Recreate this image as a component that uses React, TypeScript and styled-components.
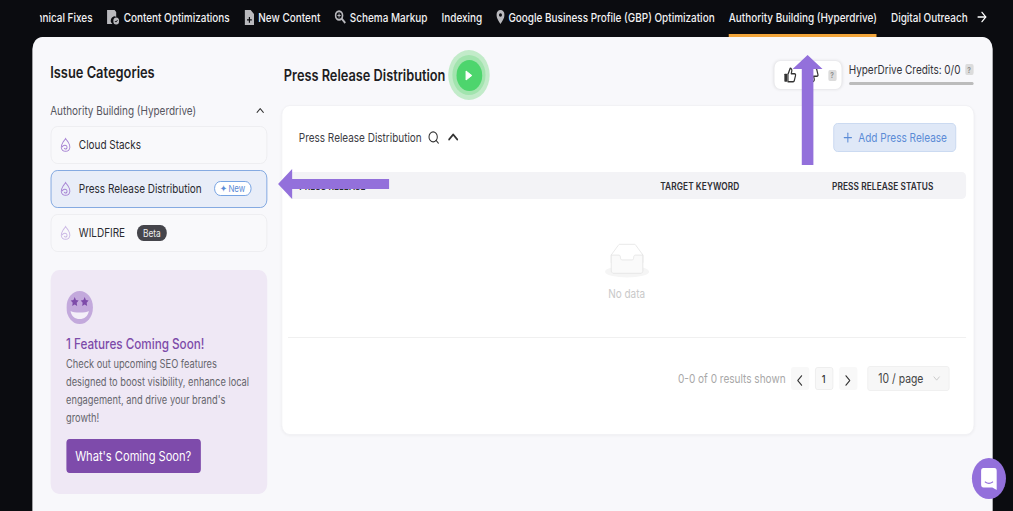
import React from "react";
import styled, { createGlobalStyle } from "styled-components";
import { Search, ChevronUp, ChevronDown, ChevronLeft, ChevronRight, ArrowRight, Plus } from "lucide-react";

const Global = createGlobalStyle`
  html, body { margin: 0; padding: 0; height: 100%; overflow: hidden; background: #0b0c10; }
  #root { height: 100%; }
  * { box-sizing: border-box; }
`;

/* The reference is a page 1220px wide photographed at 1013px: one horizontal squeeze covers all of it. */
const Page = styled.div`
  position: relative;
  width: 1220.5px;
  height: 511px;
  overflow: hidden;
  background: #0b0c10;
  font-family: Inter, "Noto Sans", sans-serif;
  transform: scaleX(0.83);
  transform-origin: 0 0;
`;
const Nav = styled.nav`
  height: 37px;
  display: flex;
  align-items: stretch;
  padding-left: 48px;
  padding-right: 26px;
`;
const NavClip = styled.div`
  flex: 1;
  min-width: 0;
  overflow: hidden;
`;
const NavTrack = styled.div`
  height: 37px;
  display: flex;
  gap: 17px;
  margin-left: -25px;
  width: max-content;
`;
const Tab = styled.div<{ $active?: boolean }>`
  height: 37px;
  display: flex;
  align-items: center;
  gap: 4.5px;
  color: #f1f1f3;
  font-size: 12px;
  font-weight: 500;
  white-space: nowrap;
  border-bottom: 3px solid ${(p) => (p.$active ? "#f2a53a" : "transparent")};
`;
const NavArrow = styled.div`
  width: 24px;
  display: flex;
  align-items: center;
  justify-content: center;
  color: #fff;
  padding-bottom: 3px;
`;
const Card = styled.main`
  margin-left: 38.5px;
  width: 1157px;
  height: 500px;
  border-radius: 12px 12px 0 0;
  background: #f8f8fb;
  padding: 24px 22px 0;
  display: flex;
  gap: 17px;
`;
const Sidebar = styled.aside`
  width: 261px;
  flex: none;
  display: flex;
  flex-direction: column;
`;
const SideTitle = styled.h2`
  margin: 0;
  height: 23px;
  line-height: 23px;
  font-size: 15.5px;
  font-weight: 600;
  color: #1d1d22;
`;
const SectionRow = styled.div`
  margin-top: 15.5px;
  height: 22px;
  display: flex;
  align-items: center;
  justify-content: space-between;
  font-size: 12px;
  color: #55555e;
  padding-right: 1px;
`;
const CatList = styled.div`
  margin-top: 4px;
  display: flex;
  flex-direction: column;
  gap: 5.5px;
`;
const Cat = styled.div<{ $active?: boolean }>`
  height: 38.5px;
  display: flex;
  align-items: center;
  padding-left: 9px;
  border-radius: 8px;
  border: 1px solid ${(p) => (p.$active ? "#7ba3de" : "#ececf0")};
  background: ${(p) => (p.$active ? "#e8edf8" : "#f9f9fb")};
  font-size: 12px;
  color: #2a2a30;
`;
const CatIcon = styled.svg<{ $faint?: boolean }>`
  width: 16px;
  height: 16px;
  flex: none;
  margin-right: 8.5px;
  opacity: ${(p) => (p.$faint ? 0.55 : 1)};
`;
const NewBadge = styled.span`
  margin-left: 14.5px;
  width: 45px;
  height: 15px;
  display: inline-flex;
  align-items: center;
  justify-content: center;
  gap: 2px;
  border-radius: 8px;
  border: 1px solid #6b9be0;
  background: #fff;
  color: #5b8bd6;
  font-size: 9.5px;
`;
const BetaBadge = styled.span`
  margin-left: 14.5px;
  height: 16px;
  padding: 0 7px;
  display: inline-flex;
  align-items: center;
  border-radius: 8px;
  background: #45454b;
  color: #f0f0f0;
  font-size: 10px;
`;
const Promo = styled.section`
  margin-top: 18px;
  height: 224px;
  border-radius: 10px;
  background: #efe8f5;
  padding: 21px 19px;
  display: flex;
  flex-direction: column;
  align-items: flex-start;
`;
const Face = styled.svg`
  width: 32px;
  height: 33px;
  flex: none;
`;
const PromoTitle = styled.h3`
  margin: 11px 0 0;
  height: 18px;
  line-height: 18px;
  font-size: 14.1px;
  font-weight: 500;
  color: #7d4ba9;
  white-space: nowrap;
`;
const PromoBody = styled.p`
  margin: 2px 0 0;
  font-size: 11.2px;
  line-height: 18px;
  color: #66666d;
  white-space: nowrap;
`;
const PromoButton = styled.button`
  margin-top: 12px;
  flex: none;
  width: 162px;
  height: 34px;
  border: 0;
  border-radius: 4px;
  background: #7e4bab;
  color: #fff;
  font-family: inherit;
  font-size: 13.4px;
  font-weight: 400;
  white-space: nowrap;
  padding: 0;
`;
const Content = styled.div`
  flex: 1;
  min-width: 0;
  display: flex;
  flex-direction: column;
`;
const Header = styled.header`
  height: 28px;
  display: flex;
  align-items: center;
  padding-left: 3.5px;
`;
const PageTitle = styled.h1`
  margin: 0;
  font-size: 15.4px;
  font-weight: 600;
  color: #1d1d22;
  white-space: nowrap;
`;
const RingOuter = styled.div`
  flex: none;
  margin-left: 3.5px;
  width: 50px;
  height: 50px;
  border-radius: 50%;
  background: #c2ebc9;
  display: flex;
  align-items: center;
  justify-content: center;
`;
const RingMiddle = styled.div`
  width: 40px;
  height: 40px;
  border-radius: 50%;
  background: #a2e4ae;
  display: flex;
  align-items: center;
  justify-content: center;
`;
const PlayDot = styled.div`
  width: 31px;
  height: 31px;
  border-radius: 50%;
  background: #4dd56d;
  display: flex;
  align-items: center;
  justify-content: center;
`;
const HeaderRight = styled.div`
  margin-left: auto;
  display: flex;
  align-items: flex-start;
  gap: 9px;
`;
const Votes = styled.div`
  width: 81px;
  height: 28px;
  border-radius: 7px;
  background: #fff;
  box-shadow: 0 0 4px rgba(0, 0, 0, 0.14);
  display: flex;
  align-items: center;
  padding-left: 11px;
  gap: 11px;
  color: #333;
`;
const Help = styled.span`
  width: 10px;
  height: 11px;
  flex: none;
  border-radius: 2px;
  background: #dcdcdc;
  color: #8a8a8a;
  font-size: 8px;
  font-weight: 600;
  display: inline-flex;
  align-items: center;
  justify-content: center;
`;
const Credits = styled.div`
  width: 150px;
  height: 28px;
  margin-right: 1px;
  display: flex;
  flex-direction: column;
`;
const CreditsText = styled.div`
  height: 17px;
  display: flex;
  align-items: center;
  justify-content: space-between;
  font-size: 12px;
  color: #33333a;
  white-space: nowrap;
`;
const CreditsBar = styled.div`
  margin-top: 4px;
  height: 3px;
  border-radius: 2px;
  background: #bcbcbc;
`;
const Panel = styled.section`
  margin-top: 16px;
  height: 330px;
  border-radius: 10px;
  background: #fff;
  border: 1px solid #f1f1f4;
  box-shadow: 0 1px 3px rgba(0, 0, 0, 0.04);
  padding: 17px 9px 0 7px;
  display: flex;
  flex-direction: column;
`;
const PanelTop = styled.div`
  height: 28px;
  display: flex;
  align-items: center;
  padding: 0 12px 0 13.5px;
`;
const PanelName = styled.div`
  font-size: 12px;
  color: #3c3c44;
  margin-right: 7px;
`;
const PanelIcons = styled.div`
  display: flex;
  align-items: center;
  gap: 6px;
  color: #333;
`;
const AddButton = styled.button`
  margin-left: auto;
  width: 148px;
  height: 29px;
  border-radius: 5px;
  border: 1px solid #c7d8f0;
  background: #dfe8f7;
  color: #5b8bd6;
  font-family: inherit;
  font-size: 12.1px;
  display: flex;
  align-items: center;
  justify-content: center;
  gap: 5px;
  white-space: nowrap;
  padding: 0;
`;
const TableHead = styled.div`
  margin-top: 21px;
  height: 27px;
  border-radius: 5px;
  background: #f3f3f6;
  display: flex;
  align-items: center;
  font-size: 10px;
  font-weight: 600;
  color: #2d2d33;
  letter-spacing: 0.1px;
`;
const FirstCol = styled.div`
  margin-left: 14px;
  width: 435px;
`;
const KeywordCol = styled.div`
  width: 207px;
`;
const Empty = styled.div`
  height: 139px;
  display: flex;
  flex-direction: column;
  align-items: center;
  padding-top: 44px;
  border-bottom: 1px solid #f0f0f0;
`;
const EmptyArt = styled.svg`
  width: 53px;
  height: 35px;
`;
const EmptyText = styled.div`
  margin-top: 8px;
  font-size: 12px;
  color: #c9c9c9;
`;
const Pager = styled.div`
  margin-top: 28px;
  display: flex;
  align-items: center;
  padding-right: 20px;
  justify-content: flex-end;
  font-size: 12.1px;
`;
const Shown = styled.span`
  color: #a8a8a8;
  margin-right: 6px;
`;
const PageBtn = styled.div<{ $current?: boolean }>`
  width: 22px;
  height: 23px;
  margin-right: 7px;
  border-radius: 3px;
  background: #f8f8f8;
  border: ${(p) => (p.$current ? "1px solid #ececec" : "0")};
  display: flex;
  align-items: ${(p) => (p.$current ? "center" : "flex-end")};
  justify-content: center;
  font-size: 11px;
  font-weight: 500;
  color: #333;
`;
const PageSize = styled.div`
  margin-left: 5px;
  width: 99px;
  height: 25px;
  border-radius: 3px;
  background: #f7f7f7;
  border: 1px solid #efefef;
  display: flex;
  align-items: center;
  justify-content: flex-end;
  gap: 9px;
  padding-right: 8px;
  font-size: 12.5px;
  color: #444;
`;
const ArrowArt = styled.svg<{ $kind: "left" | "up" }>`
  position: absolute;
  pointer-events: none;
  ${(p) =>
    p.$kind === "left"
      ? "left: 335px; top: 169px; width: 134px; height: 30px;"
      : "left: 953px; top: 55px; width: 40px; height: 110px;"}
`;
const Chat = styled.div`
  position: absolute;
  left: 1171px;
  top: 458px;
  width: 41px;
  height: 41px;
  border-radius: 50%;
  background: #9370db;
  display: flex;
  align-items: center;
  justify-content: center;
`;

const Swirl = ({ faint }: { faint?: boolean }) => (
  <CatIcon $faint={faint} viewBox="0 0 16 16" fill="none" stroke="#a784d3" strokeWidth="1.1">
    <path d="M8 1.5c1 1.6 2.2 2.4 3.4 4 1.4 1.9 2.1 3.3 1.8 5-.4 2.3-2.5 3.800-5.200 3.800s-4.800-1.500-5.200-3.800c-.3-1.700.6-3.200 1.900-5C5.900 3.900 7 3 8 1.500z" />
    <path d="M3.500 10c1.500-1.600 3.500-2 5-1.400 1.300.5 1.700 2 .8 2.900-.9.9-2.500.7-3-.4" />
  </CatIcon>
);

const Thumb = ({ down }: { down?: boolean }) => (
  <svg width="16" height="16" viewBox="0 0 24 24" fill="none" stroke="#333" strokeWidth="2.2" strokeLinejoin="round">
    <g transform={down ? "matrix(1 0 0 -1 0 24)" : undefined}>
      <path d="M15 5.880 14 10h5.830a2 2 0 0 1 1.920 2.560l-2.330 8A2 2 0 0 1 17.500 22H8V10.500l.55-.6L12 2a3.130 3.130 0 0 1 3 3.880Z" />
      <rect x="1.500" y="10" width="5" height="12" rx="1" fill="#333" stroke="none" />
    </g>
  </svg>
);

const FileCheck = () => (
  <svg width="16" height="15" viewBox="0 0 16 15" fill="#b9b9bd">
    <path d="M1 0h9l2 2v5a4 4 0 0 0-4.500 7H1z" />
    <circle cx="12" cy="11" r="3.500" />
    <path d="M10.500 11l1.100 1.100 2-2" stroke="#0b0c10" strokeWidth="1" fill="none" />
  </svg>
);
const FilePlus = () => (
  <svg width="13" height="15" viewBox="0 0 13 15" fill="#b9b9bd">
    <path fillRule="evenodd" d="M1 0h7l4 4v11H1zM5.800 7v2.200H3.600v1.300h2.200v2.200h1.400v-2.200h2.200V9.200H7.200V7z" />
  </svg>
);
const ZoomPlus = () => (
  <svg width="14" height="14" viewBox="0 0 14 14">
    <circle cx="5.500" cy="5.500" r="4.200" fill="none" stroke="#b9b9bd" strokeWidth="2" />
    <path d="M8.500 8.500l4.500 4.500" stroke="#b9b9bd" strokeWidth="2.200" />
    <path d="M3.500 5.500h4M5.500 3.500v4" stroke="#b9b9bd" strokeWidth="1.200" />
  </svg>
);
const Pin = () => (
  <svg width="10" height="14" viewBox="0 0 10 14" fill="#b9b9bd">
    <path fillRule="evenodd" d="M5 0a5 5 0 0 1 5 5c0 3.200-5 9-5 9S0 8.200 0 5a5 5 0 0 1 5-5zm0 3.200a1.800 1.800 0 1 0 0 3.600 1.800 1.800 0 0 0 0-3.600z" />
  </svg>
);

export default function App() {
  return (
    <Page>
      <Global />
      <Nav>
        <NavClip>
          <NavTrack>
            <Tab>Technical Fixes</Tab>
            <Tab><FileCheck />Content Optimizations</Tab>
            <Tab><FilePlus />New Content</Tab>
            <Tab><ZoomPlus />Schema Markup</Tab>
            <Tab>Indexing</Tab>
            <Tab><Pin />Google Business Profile (GBP) Optimization</Tab>
            <Tab $active>Authority Building (Hyperdrive)</Tab>
            <Tab>Digital Outreach</Tab>
          </NavTrack>
        </NavClip>
        <NavArrow><ArrowRight size={16} strokeWidth={2} /></NavArrow>
      </Nav>
      <Card>
        <Sidebar>
          <SideTitle>Issue Categories</SideTitle>
          <SectionRow>
            Authority Building (Hyperdrive)
            <ChevronUp size={15} color="#333" />
          </SectionRow>
          <CatList>
            <Cat><Swirl />Cloud Stacks</Cat>
            <Cat $active><Swirl />Press Release Distribution<NewBadge>✦ New</NewBadge></Cat>
            <Cat><Swirl faint />WILDFIRE<BetaBadge>Beta</BetaBadge></Cat>
          </CatList>
          <Promo>
            <Face viewBox="0 0 32 33">
              <ellipse cx="16" cy="16.500" rx="16" ry="16.500" fill="#c3a9dc" />
              <path d="M10 6l1.500 3 3.300.4-2.400 2.300.6 3.300-3-1.600-3 1.600.6-3.300-2.400-2.300 3.300-.4zM22 6l1.500 3 3.300.4-2.400 2.300.6 3.300-3-1.600-3 1.600.6-3.300-2.400-2.300 3.300-.4z" fill="#7d4ba9" />
              <path d="M5 20c4 2 18 2 22 0-1 5.500-5.500 8-11 8s-10-2.500-11-8z" fill="#f4eff9" />
            </Face>
            <PromoTitle>1 Features Coming Soon!</PromoTitle>
            <PromoBody>
              Check out upcoming SEO features<br />
              designed to boost visibility, enhance local<br />
              engagement, and drive your brand's<br />
              growth!
            </PromoBody>
            <PromoButton>What's Coming Soon?</PromoButton>
          </Promo>
        </Sidebar>
        <Content>
          <Header>
            <PageTitle>Press Release Distribution</PageTitle>
            <RingOuter>
              <RingMiddle>
                <PlayDot>
                  <svg width="10" height="11" viewBox="0 0 10 11"><path d="M1.500 1l7 4.500-7 4.500z" fill="#fff" stroke="#fff" strokeLinejoin="round" /></svg>
                </PlayDot>
              </RingMiddle>
            </RingOuter>
            <HeaderRight>
              <Votes>
                <Thumb />
                <Thumb down />
                <Help>?</Help>
              </Votes>
              <Credits>
                <CreditsText>
                  <span>HyperDrive Credits: 0/0</span>
                  <Help>?</Help>
                </CreditsText>
                <CreditsBar />
              </Credits>
            </HeaderRight>
          </Header>
          <Panel>
            <PanelTop>
              <PanelName>Press Release Distribution</PanelName>
              <PanelIcons>
                <Search size={15} />
                <ChevronUp size={20} strokeWidth={2.2} />
              </PanelIcons>
              <AddButton><Plus size={15} />Add Press Release</AddButton>
            </PanelTop>
            <TableHead>
              <FirstCol>PRESS RELEASE</FirstCol>
              <KeywordCol>TARGET KEYWORD</KeywordCol>
              <div>PRESS RELEASE STATUS</div>
            </TableHead>
            <Empty>
              <EmptyArt viewBox="0 0 64 41">
                <g transform="translate(0 1)" fill="none" fillRule="evenodd">
                  <ellipse fill="#f5f5f5" cx="32" cy="33" rx="32" ry="7" />
                  <g fillRule="nonzero" stroke="#e2e2e2">
                    <path d="M55 12.760L44.854 1.258C44.367.474 43.656 0 42.907 0H21.093c-.749 0-1.460.474-1.947 1.257L9 12.761V22h46v-9.240z" />
                    <path d="M41.613 15.931c0-1.605.994-2.930 2.227-2.931H55v18.137C55 33.260 53.680 35 52.050 35h-40.100C10.320 35 9 33.259 9 31.137V13h11.160c1.233 0 2.227 1.323 2.227 2.928v.022c0 1.605 1.005 2.901 2.237 2.901h14.752c1.232 0 2.237-1.308 2.237-2.913v-.007z" fill="#fafafa" />
                  </g>
                </g>
              </EmptyArt>
              <EmptyText>No data</EmptyText>
            </Empty>
            <Pager>
              <Shown>0-0 of 0 results shown</Shown>
              <PageBtn><ChevronLeft size={19} strokeWidth={1.4} /></PageBtn>
              <PageBtn $current>1</PageBtn>
              <PageBtn><ChevronRight size={19} strokeWidth={1.4} /></PageBtn>
              <PageSize>10 / page<ChevronDown size={13} color="#bbb" strokeWidth={1.5} /></PageSize>
            </Pager>
          </Panel>
        </Content>
      </Card>
      <ArrowArt $kind="left" viewBox="0 0 134 30">
        <path d="M0 15L17 0v10h117v10H17v10z" fill="#9370db" />
      </ArrowArt>
      <ArrowArt $kind="up" viewBox="0 0 40 110">
        <path d="M20 0l18 14H27v96H13V14H2z" fill="#9370db" />
      </ArrowArt>
      <Chat>
        <svg width="19" height="22" viewBox="0 0 19 22">
          <path d="M3 0h13a3 3 0 0 1 3 3v19l-5.500-2.500H3a3 3 0 0 1-3-3V3a3 3 0 0 1 3-3z" fill="#fff" />
          <path d="M5 14c3 1.800 6 1.800 9 0" fill="none" stroke="#9370db" strokeWidth="1.300" strokeLinecap="round" />
        </svg>
      </Chat>
    </Page>
  );
}
